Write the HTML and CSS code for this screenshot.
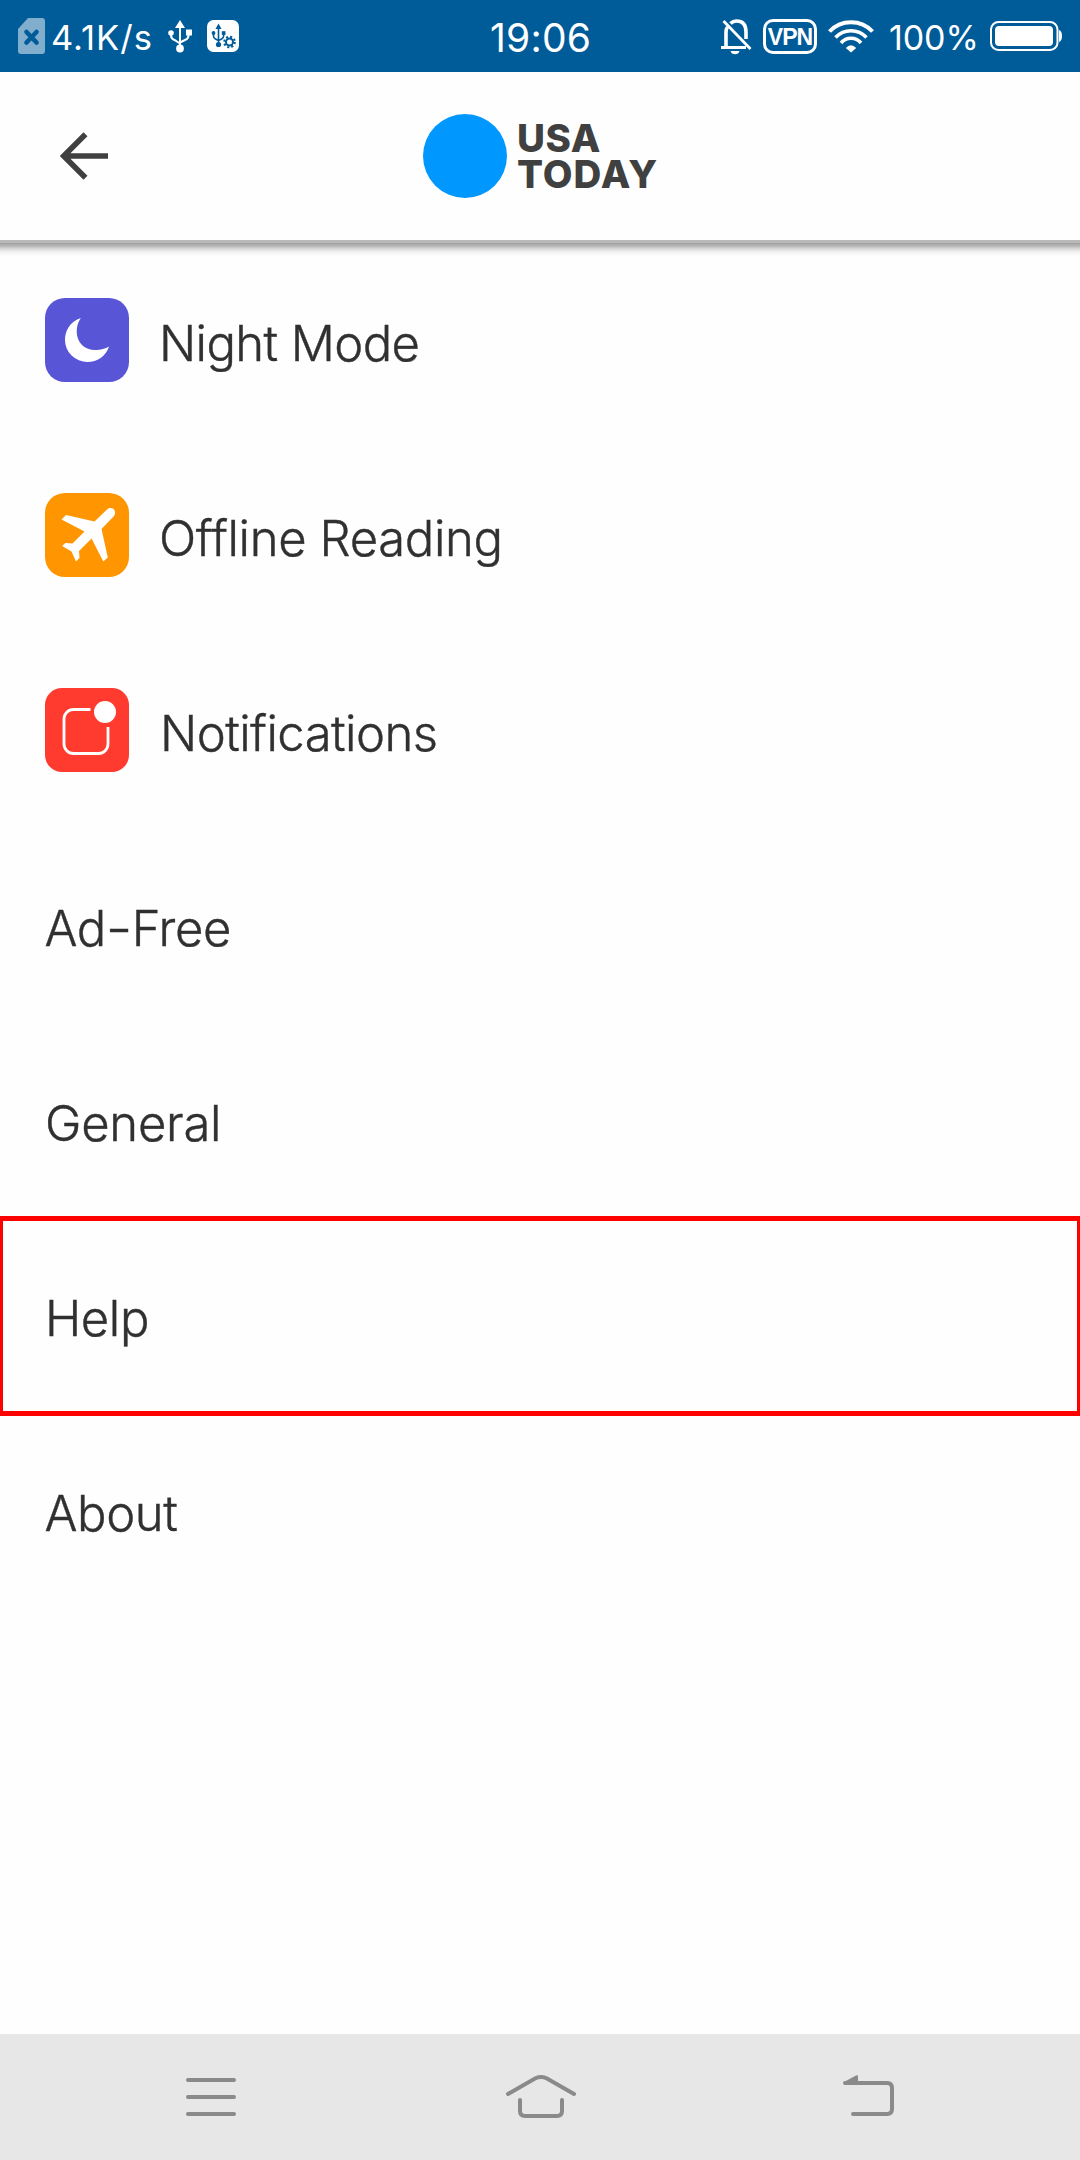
FILE: index.html
```html
<!DOCTYPE html>
<html lang="en">
<head>
<meta charset="utf-8">
<title>Settings</title>
<link rel="stylesheet" href="styles.css">
</head>
<body>
<div class="status">
  <div class="status-left">
    <svg class="sim" width="27" height="36" viewBox="0 0 27 36"><path d="M10 0h14a3 3 0 0 1 3 3v30a3 3 0 0 1-3 3H3a3 3 0 0 1-3-3V11z" fill="#82aecd"/><path d="M8.500 14l10 10.500M18.500 14l-10 10.500" stroke="#005b99" stroke-width="4.600" stroke-linecap="round"/></svg>
    <span class="speed">4.1K/s</span>
    <svg class="usb" width="24" height="33" viewBox="0 0 24 33"><path d="M12 5v23M3 13v2.500q0 3 3.500 4.500l5.500 3.500M20.500 13v2.500q0 3-3.500 4.500l-5 2.500" fill="none" stroke="#fff" stroke-width="2"/><path d="M12 0l5 8H7z" fill="#fff"/><circle cx="3" cy="13" r="2.800" fill="#fff"/><path d="M18 9.500h6v6h-6z" fill="#fff"/><circle cx="12" cy="28.500" r="3.900" fill="#fff"/></svg>
    <svg class="usb-set" width="32" height="32" viewBox="0 0 32 32"><rect width="32" height="32" rx="6.500" fill="#fff"/><g fill="#005b99"><path d="M11.500 3.500l3 5.500H8.500z"/><circle cx="6.500" cy="13" r="1.900"/><path d="M14.800 11.200h3.700v3.700h-3.700z"/><circle cx="11.500" cy="24.500" r="2.600"/></g><path d="M11.500 8v16M6.500 13v3q0 2 2 3l3 1.500M16.600 13v3q0 2-2 3l-3 1.500" fill="none" stroke="#005b99" stroke-width="1.600"/><circle cx="22.500" cy="22" r="5.300" fill="none" stroke="#005b99" stroke-width="2" stroke-dasharray="2.080 2.080"/><circle cx="22.500" cy="22" r="3.500" fill="#fff" stroke="#005b99" stroke-width="2"/></svg>
  </div>
  <span class="time">19:06</span>
  <div class="status-right">
    <svg class="bell" width="32" height="36" viewBox="0 0 32 36"><g fill="none" stroke="#fff"><path d="M5 29V13q0-3 1.500-5M9.500 4.500Q12 2 15.500 2q9.500 0 9.500 11v7" stroke-width="3.600"/><path d="M0 28.500h25" stroke-width="3"/><path d="M2.500 2L29.500 30" stroke-width="2.800"/></g><path d="M9.500 32h9q-1 3.200-4.500 3.200T9.500 32z" fill="#fff"/></svg>
    <span class="vpn"><span class="vpn-text">VPN</span></span>
    <svg class="wifi" width="46" height="33" viewBox="0 0 46 33"><g fill="none" stroke="#fff" stroke-width="4"><path d="M1.500 11.500Q10 2.200 23 2.200T44.500 11.500"/><path d="M7.500 17.500Q14 10.800 23 10.800T38.500 17.500" stroke-width="3.600"/><path d="M13 23Q17 18.300 23 18.300T33 23" stroke-width="3.600"/></g><path d="M17.800 28q5.200-5.600 10.400 0L23 32.500z" fill="#fff"/></svg>
    <span class="percent">100%</span>
    <svg class="battery" width="72" height="30" viewBox="0 0 72 30"><rect x="1" y="1" width="66.500" height="28" rx="7.500" fill="none" stroke="#fff" stroke-width="2"/><rect x="5" y="5" width="58" height="20" rx="4" fill="#fff"/><path d="M69 9q3 1 3 6t-3 6z" fill="#fff"/></svg>
  </div>
</div>
<header class="bar">
  <svg class="back" width="48" height="48" viewBox="0 0 48 48"><path d="M25.500 2.200L3.700 24l21.800 21.800M4 24h44" fill="none" stroke="#404040" stroke-width="5.600"/></svg>
  <div class="logo"><div class="dot"></div><div class="brand"><span class="usa">USA</span><span class="today">TODAY</span></div></div>
</header>
<main class="list">
  <div class="row"><svg class="tile" width="84" height="84" viewBox="0 0 84 84"><rect width="84" height="84" rx="20" fill="#5856d6"/><path d="M35.800 20C24 24 20 34 20 42a22.500 22 0 0 0 22.500 22C52 64 61 58.500 64 48.600C58 52.500 49 53 42.500 50.500C30.500 45.500 29 30 35.800 20z" fill="#fff"/></svg><span class="label night">Night Mode</span></div>
  <div class="row"><svg class="tile" width="84" height="84" viewBox="0 0 84 84"><rect width="84" height="84" rx="20" fill="#ff9500"/><path d="M49.500 28.500L62 16.500c5-4 10.500 1.500 7 6.500L56.500 36l6.300 28.500-4.500 4L46.500 45.500 34 58l.5 7-3.500 3.500-4.500-10-9.500-5.500 3.500-3 7 .5L39.500 38.500 16.500 26.500l4.500-4.500z" fill="#fff"/></svg><span class="label offline">Offline Reading</span></div>
  <div class="row"><svg class="tile" width="84" height="84" viewBox="0 0 84 84"><rect width="84" height="84" rx="17" fill="#ff3b30"/><path d="M45.500 21.500H28.500a9.500 9.500 0 0 0-9.500 9.500v25a9.500 9.500 0 0 0 9.500 9.500h25a9.500 9.500 0 0 0 9.500-9.500V39" fill="none" stroke="#fff" stroke-width="2.800"/><circle cx="60" cy="24" r="11" fill="#fff"/></svg><span class="label notif">Notifications</span></div>
  <div class="row"><span class="label adfree">Ad<span class="hyphen">-</span>Free</span></div>
  <div class="row"><span class="label general">General</span></div>
  <div class="row selected"><span class="label help">Help</span></div>
  <div class="row"><span class="label about">About</span></div>
</main>
<nav class="nav">
  <svg class="menu" width="50" height="38" viewBox="0 0 50 38"><path d="M2 2h46M2 19h46M2 36h46" stroke="#8a8a8a" stroke-width="4" stroke-linecap="round"/></svg>
  <svg class="home" width="70" height="43" viewBox="0 0 70 43"><path d="M2 19L29 3.500q6-3 12 0L68 19M14 25v11q0 5 5 5h32q5 0 5-5V25" fill="none" stroke="#8a8a8a" stroke-width="4" stroke-linecap="round"/></svg>
  <svg class="return" width="51" height="41" viewBox="0 0 51 41"><path d="M2 8h42q5 0 5 5v21q0 5-5 5H10" fill="none" stroke="#8a8a8a" stroke-width="4" stroke-linecap="round"/><path d="M1 7L13.500 0.300Q15 0 15 1.500V9H2z" fill="#8a8a8a"/></svg>
</nav>
</body>
</html>
```
FILE: styles.css
```css
* { box-sizing: border-box; }
body { margin: 0; width: 1080px; height: 2160px; display: flex; flex-direction: column; background: #fefefe; font-family: Inter, "Liberation Sans", sans-serif; overflow: hidden; }
svg { display: block; flex: none; }
span { white-space: nowrap; }
.status { height: 72px; flex: none; display: grid; grid-template-columns: 490px 100px 490px; background: #005b99; color: #fff; }
.status-left, .status-right { display: flex; align-items: flex-start; }
.sim { margin: 18px 0 0 18px; }
.speed { width: 115px; margin-left: 6px; font-size: 34.5px; line-height: 73px; margin-top: 1px; letter-spacing: 1px; }
.usb { margin: 20px 0 0 2px; }
.usb-set { margin: 20px 0 0 15px; }
.time { font-size: 39px; line-height: 76px; letter-spacing: 0.2px; }
.bell { margin: 19px 0 0 131px; }
.vpn { width: 54px; height: 35px; margin: 19px 0 0 10px; border: 3px solid #fff; border-radius: 10px; display: flex; justify-content: center; }
.vpn-text { font: bold 23px/30px "Liberation Sans", sans-serif; letter-spacing: -1px; }
.wifi { margin: 20px 0 0 11px; }
.percent { width: 90px; margin: 1px 0 0 15px; font-size: 34px; line-height: 73px; letter-spacing: -0.1px; }
.battery { margin: 21px 0 0 11px; }
.bar { height: 168px; flex: none; display: flex; position: relative; background: #fefefe; }
.bar::after { content: ""; position: absolute; left: 0; right: 0; top: 168px; height: 16px; background: linear-gradient(#b9b9b9 0 3px, #9f9f9f 3px, #b8b8b8 6px, #dadada 9px, #f2f2f2 12px, #fefefe 16px); }
.back { margin: 60px 0 0 60px; }
.logo { display: flex; margin: 42px 0 0 315px; }
.dot { width: 84px; height: 84px; border-radius: 50%; background: #0098fe; }
.brand { margin: 7px 0 0 10px; display: flex; flex-direction: column; color: #404040; font-weight: 800; font-size: 38.5px; line-height: 35.5px; }
.usa { letter-spacing: 0.6px; }
.today { letter-spacing: 1px; }
.list { flex: 1; padding-top: 2px; }
.row { height: 195px; display: flex; align-items: center; padding-left: 45px; }
.tile { margin-right: 30px; }
.label { font-size: 49px; font-weight: 300; line-height: 60px; color: #303030; padding-top: 9px; letter-spacing: -0.4px; -webkit-text-stroke: 0.4px #303030; }
.night { letter-spacing: -0.62px; }
.offline { letter-spacing: -0.35px; }
.notif { margin-left: 1px; letter-spacing: -0.55px; }
.adfree, .about { margin-left: -0.5px; }
.general { letter-spacing: -0.25px; }
.hyphen { display: inline-block; transform: scaleX(1.2); margin: 0 2px; }
.selected { position: relative; }
.selected::before { content: ""; position: absolute; inset: -1px 0 -4px; border: solid #f00; border-width: 5px 3px; }
.nav { height: 126px; flex: none; background: #e7e7e7; display: flex; align-items: flex-start; }
.menu { margin: 44px 0 0 186px; }
.home { margin: 41px 0 0 270px; }
.return { margin: 41px 0 0 267px; }
```
